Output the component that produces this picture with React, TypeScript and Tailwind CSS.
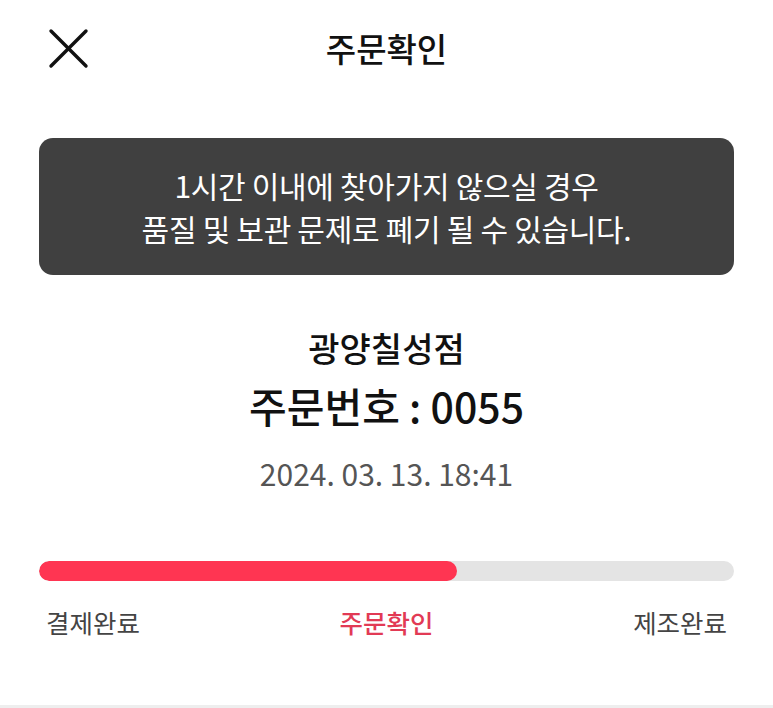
import React from "react";

const font = { fontFamily: '"Noto Sans CJK KR", "Noto Sans", sans-serif' };

export default function App() {
  return (
    <div className="w-[773px] h-[708px] bg-white flex flex-col overflow-hidden" style={font}>
      <div className="relative h-[96px] flex items-center justify-center">
        <button className="absolute left-[48px] top-[28px] w-[41px] h-[41px] flex items-center justify-center">
          <svg width="41" height="41" viewBox="0 0 41 41" fill="none" stroke="#111" strokeWidth="3.4" strokeLinecap="round">
            <line x1="3" y1="3" x2="38" y2="38" />
            <line x1="38" y1="3" x2="3" y2="38" />
          </svg>
        </button>
        <h1 className="text-[33px] font-medium text-[#111] leading-none">주문확인</h1>
      </div>

      <div className="px-[39px] mt-[42px]">
        <div className="h-[137px] rounded-[14px] bg-[#404040] flex flex-col items-center justify-center text-white text-[30px] leading-[43px] tracking-[-0.3px]">
          <p>1시간 이내에 찾아가지 않으실 경우</p>
          <p>품질 및 보관 문제로 폐기 될 수 있습니다.</p>
        </div>
      </div>

      <div className="flex flex-col items-center mt-[51px]">
        <p className="text-[34px] font-medium text-[#111] leading-[44px]">광양칠성점</p>
        <p className="text-[41px] font-medium text-[#111] leading-[56px] mt-[7px]">주문번호 : 0055</p>
        <p className="text-[30px] text-[#555] leading-[40px] mt-[20px]">2024. 03. 13. 18:41</p>
      </div>

      <div className="px-[39px] mt-[68px]">
        <div className="h-[20px] rounded-full bg-[#e4e4e4] overflow-hidden">
          <div className="h-full w-[418px] rounded-full bg-[#ff3552]" />
        </div>
        <div className="flex justify-between items-center mt-[24px] px-[7px] text-[25.5px] leading-[34px]">
          <span className="text-[#444]">결제완료</span>
          <span className="text-[#e23a55] font-medium">주문확인</span>
          <span className="text-[#444]">제조완료</span>
        </div>
      </div>

      <div className="flex-1" />
      <div className="h-[3px] bg-[#eeeeee]" />
    </div>
  );
}
